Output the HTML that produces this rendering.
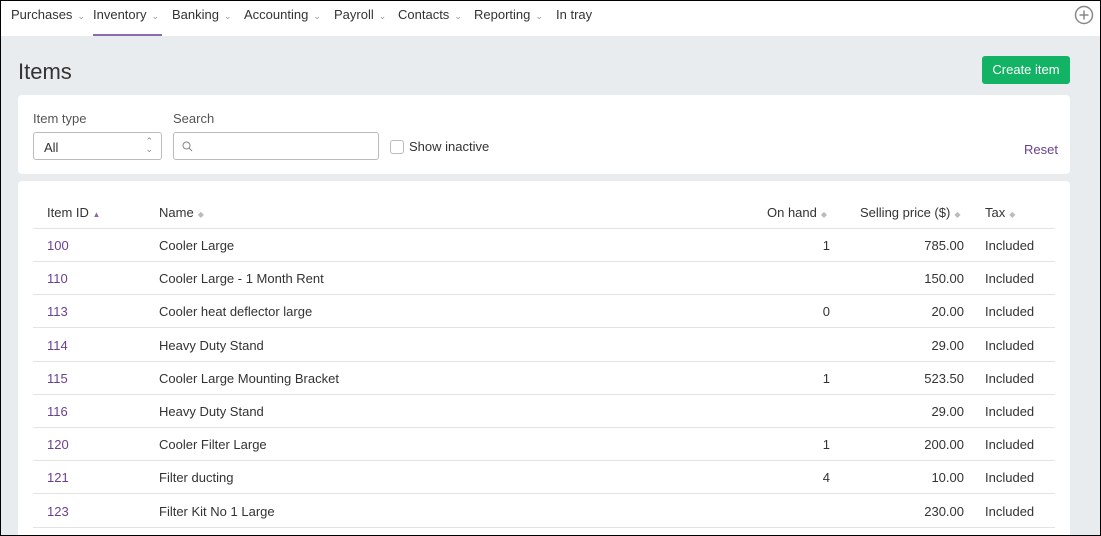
<!DOCTYPE html>
<html><head><style>
*{box-sizing:border-box;margin:0;padding:0}
html,body{width:1101px;height:536px;overflow:hidden}
body{background:#e9ecef;font-family:"Liberation Sans",sans-serif;font-size:13px;color:#333;position:relative}
.frame{position:absolute;left:0;top:0;width:1101px;height:536px;border:1px solid #000;z-index:10}
.nav{position:absolute;left:0;top:0;width:1101px;height:36px;background:#fff}
.nav span{position:absolute;top:7px;font-size:13px;color:#333}
.nav span i{font-style:normal;font-size:9px;color:#999;margin-left:5px}
.ul{position:absolute;left:93px;top:34px;width:69px;height:2px;background:#8c6aae}
h1{position:absolute;left:18px;top:59px;font-size:22px;font-weight:normal;color:#333}
.btn{position:absolute;left:982px;top:56px;width:88px;height:28px;background:#12b365;border-radius:3px;color:#fff;font-size:13px;text-align:center;line-height:28px}
.card{position:absolute;left:18px;width:1052px;background:#fff;border-radius:4px}
.lbl{position:absolute;font-size:13px;color:#555}
.inp{position:absolute;border:1px solid #bbb;border-radius:3px;height:28px;background:#fff}
.t{position:absolute;font-size:13px}
.line{position:absolute;left:33px;width:1022px;height:1px;background:#e3e3e3}
.sort{color:#bbb;font-size:8px;margin-left:4px}
.id{color:#6b3f93}
</style></head><body>
<div class="frame"></div>
<div class="nav">
<span style="left:11px">Purchases<i>⌄</i></span>
<span style="left:93px">Inventory<i>⌄</i></span>
<span style="left:172px">Banking<i>⌄</i></span>
<span style="left:244px">Accounting<i>⌄</i></span>
<span style="left:334px">Payroll<i>⌄</i></span>
<span style="left:398px">Contacts<i>⌄</i></span>
<span style="left:474px">Reporting<i>⌄</i></span>
<span style="left:556px">In tray</span>
<div class="ul"></div>
<svg style="position:absolute;left:1074px;top:5px" width="20" height="20" viewBox="0 0 20 20"><circle cx="10" cy="10" r="8.5" stroke="#888" stroke-width="1.5" fill="none"/><path d="M10 5.5v9M5.5 10h9" stroke="#888" stroke-width="1.5"/></svg>
</div>
<h1>Items</h1>
<div class="btn">Create item</div>
<div class="card" style="top:95px;height:79px"></div>
<div class="lbl" style="left:33px;top:111px">Item type</div>
<div class="lbl" style="left:173px;top:111px">Search</div>
<div class="inp" style="left:33px;top:132px;width:129px"><span style="position:absolute;left:10px;top:7px">All</span><span style="position:absolute;right:8px;top:4px;font-size:9px;color:#888;line-height:8px">⌃<br>⌄</span></div>
<div class="inp" style="left:173px;top:132px;width:206px"><svg style="position:absolute;left:8px;top:8px" width="11" height="11" viewBox="0 0 11 11"><circle cx="4.5" cy="4.5" r="3.5" stroke="#888" fill="none"/><path d="M7 7l3 3" stroke="#888"/></svg></div>
<div style="position:absolute;left:390px;top:140px;width:14px;height:14px;border:1px solid #bbb;border-radius:3px"></div>
<div class="t" style="left:409px;top:139px">Show inactive</div>
<div class="t id" style="left:1024px;top:142px">Reset</div>
<div class="card" style="top:181px;height:360px"></div>
<div class="t" style="left:47px;top:205px;color:#333">Item ID <span style="color:#8c6aae;font-size:8px">▲</span></div>
<div class="t" style="left:159px;top:205px">Name<span class="sort">◆</span></div>
<div class="t" style="left:767px;top:205px">On hand<span class="sort">◆</span></div>
<div class="t" style="left:860px;top:205px">Selling price ($)<span class="sort">◆</span></div>
<div class="t" style="left:985px;top:205px">Tax<span class="sort">◆</span></div>
<div class="line" style="top:228px"></div>
<div id="rows"></div>
<script>
var d=[["100","Cooler Large","1","785.00"],["110","Cooler Large - 1 Month Rent","","150.00"],["113","Cooler heat deflector large","0","20.00"],["114","Heavy Duty Stand","","29.00"],["115","Cooler Large Mounting Bracket","1","523.50"],["116","Heavy Duty Stand","","29.00"],["120","Cooler Filter Large","1","200.00"],["121","Filter ducting","4","10.00"],["123","Filter Kit No 1 Large","","230.00"]];
var h="";d.forEach(function(r,i){var y=238+i*33.2;
h+='<div class="t id" style="left:47px;top:'+y+'px">'+r[0]+'</div><div class="t" style="left:159px;top:'+y+'px">'+r[1]+'</div><div class="t" style="left:700px;width:130px;text-align:right;top:'+y+'px">'+r[2]+'</div><div class="t" style="left:840px;width:124px;text-align:right;top:'+y+'px">'+r[3]+'</div><div class="t" style="left:985px;top:'+y+'px">Included</div><div class="line" style="top:'+(261+i*33.2)+'px"></div>';});
document.getElementById("rows").innerHTML=h;
</script>
</body></html>
